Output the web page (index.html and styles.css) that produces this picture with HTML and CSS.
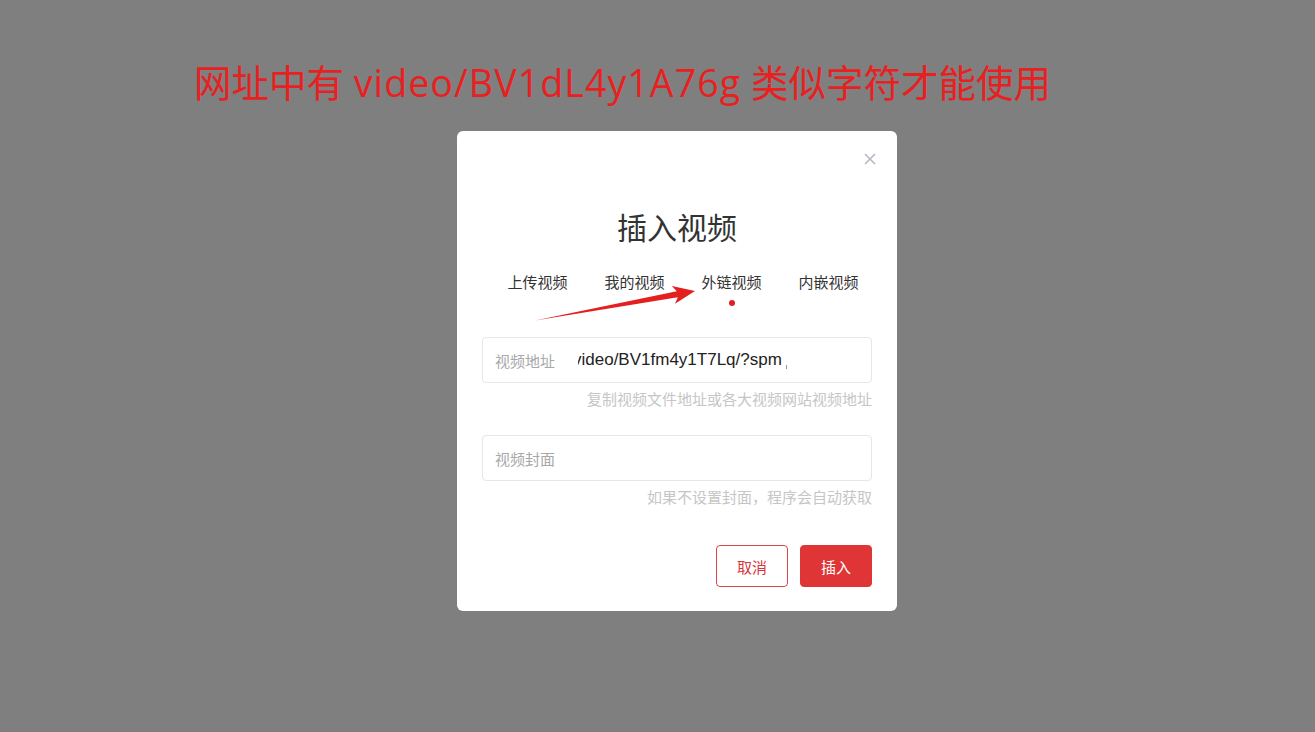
FILE: index.html
```html
<!DOCTYPE html>
<html lang="zh-CN">
<head>
<meta charset="utf-8">
<title>插入视频</title>
<link rel="stylesheet" href="styles.css">
</head>
<body>
<div class="page">
  <h1 class="notice">网址中有 <span class="latin">video/BV1dL4y1A76g</span> 类似字符才能使用</h1>
  <div class="dialog">
    <button class="close" aria-label="关闭">
      <svg width="12" height="12" viewBox="0 0 12 12"><path d="M1 1L11 11M11 1L1 11" stroke="#b3b8c1" stroke-width="1.6" fill="none"/></svg>
    </button>
    <h2 class="title">插入视频</h2>
    <div class="tabs">
      <div class="tab">上传视频</div>
      <div class="tab">我的视频</div>
      <div class="tab active">外链视频<span class="dot"></span></div>
      <div class="tab">内嵌视频</div>
    </div>
    <div class="form">
      <div class="field">
        <span class="label">视频地址</span>
        <div class="value"><span class="value-text">video/BV1fm4y1T7Lq/?spm</span><span class="caret"></span></div>
      </div>
      <div class="hint">复制视频文件地址或各大视频网站视频地址</div>
      <div class="field field-cover">
        <span class="label">视频封面</span>
      </div>
      <div class="hint">如果不设置封面，程序会自动获取</div>
      <div class="actions">
        <button class="btn btn-cancel">取消</button>
        <button class="btn btn-primary">插入</button>
      </div>
    </div>
  </div>
  <svg class="arrow" width="1315" height="732" viewBox="0 0 1315 732">
    <polygon points="535,320.5 677.8,297.2 675,303.8 695,291 671.8,286 676.8,291.2" fill="#e3201f"/>
  </svg>
</div>
</body>
</html>
```
FILE: styles.css
```css
html, body {
  margin: 0;
  padding: 0;
}
body {
  background: #7f7f7f;
  width: 1315px;
  height: 732px;
  overflow: hidden;
  font-family: "Noto Sans CJK SC", "Noto Sans", sans-serif;
}
.page {
  position: relative;
  width: 1315px;
  height: 732px;
  padding-top: 58px;
  box-sizing: border-box;
}
.notice {
  margin: 0 0 0 194px;
  height: 50px;
  line-height: 50px;
  font-size: 37.5px;
  font-weight: 400;
  color: #e8201f;
  font-family: "Open Sans", "Noto Sans CJK SC", sans-serif;
  white-space: nowrap;
}
.latin {
  letter-spacing: 1.1px;
}
.dialog {
  position: relative;
  margin: 23px 0 0 457px;
  width: 440px;
  height: 480px;
  background: #fff;
  border-radius: 6px;
  box-sizing: border-box;
  padding-top: 75px;
}
.close {
  position: absolute;
  top: 22px;
  right: 21px;
  width: 12px;
  height: 12px;
  padding: 0;
  border: 0;
  background: none;
  display: flex;
}
.title {
  margin: 0;
  height: 40px;
  line-height: 40px;
  text-align: center;
  font-size: 30px;
  font-weight: 400;
  color: #333;
}
.tabs {
  display: flex;
  margin-top: 26px;
  padding-left: 32px;
}
.tab {
  width: 97px;
  display: flex;
  flex-direction: column;
  align-items: center;
  font-size: 15px;
  line-height: 20px;
  color: #333;
  height: 34px;
}
.dot {
  width: 6px;
  height: 6px;
  border-radius: 50%;
  background: #e02020;
  margin-top: 8px;
}
.form {
  padding: 0 25px;
  margin-top: 31px;
}
.field {
  height: 46px;
  border: 1px solid #e6e6e6;
  border-radius: 4px;
  box-sizing: border-box;
  display: flex;
  align-items: center;
  padding-left: 12px;
}
.label {
  font-size: 15px;
  color: #a8a8a8;
  width: 83px;
  flex: none;
}
.value {
  flex: 1;
  overflow: hidden;
  display: flex;
  align-items: center;
  height: 26px;
  margin-right: 12px;
}
.value-text {
  margin-left: -5px;
  font-family: "Liberation Sans", Arial, sans-serif;
  font-size: 17px;
  color: #222;
  white-space: nowrap;
}
.caret {
  width: 1px;
  height: 4px;
  background: #999;
  margin-left: 4px;
  align-self: flex-end;
  margin-bottom: 4px;
}
.hint {
  margin-top: 6px;
  text-align: right;
  font-size: 15px;
  line-height: 20px;
  color: #c6c6c6;
}
.field-cover {
  margin-top: 26px;
}
.actions {
  margin-top: 38px;
  display: flex;
  justify-content: flex-end;
  gap: 12px;
}
.btn {
  width: 72px;
  height: 42px;
  border-radius: 4px;
  font-size: 15px;
  font-family: "Noto Sans CJK SC", sans-serif;
  box-sizing: border-box;
  padding: 0;
}
.btn-cancel {
  background: #fff;
  border: 1px solid #d9454a;
  color: #d6353b;
}
.btn-primary {
  background: #e03536;
  border: 1px solid #e03536;
  color: #fff;
}
.arrow {
  position: absolute;
  left: 0;
  top: 0;
  pointer-events: none;
}
```
